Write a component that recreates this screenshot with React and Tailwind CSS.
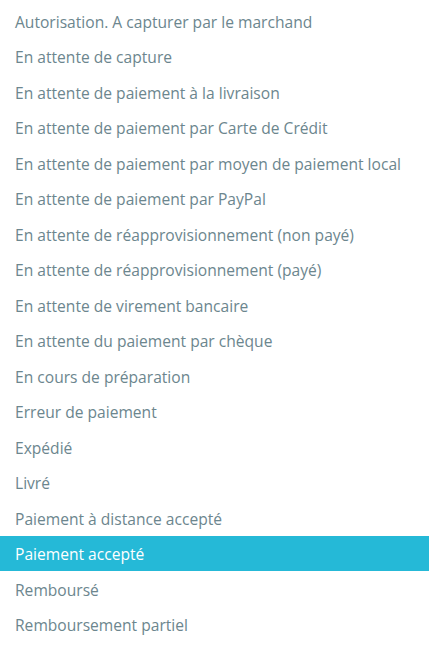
import React from 'react';

const statuses = [
  'Autorisation. A capturer par le marchand',
  'En attente de capture',
  'En attente de paiement à la livraison',
  'En attente de paiement par Carte de Crédit',
  'En attente de paiement par moyen de paiement local',
  'En attente de paiement par PayPal',
  'En attente de réapprovisionnement (non payé)',
  'En attente de réapprovisionnement (payé)',
  'En attente de virement bancaire',
  'En attente du paiement par chèque',
  'En cours de préparation',
  'Erreur de paiement',
  'Expédié',
  'Livré',
  'Paiement à distance accepté',
  'Paiement accepté',
  'Remboursé',
  'Remboursement partiel',
];

const App = () => {
  const selected = 'Paiement accepté';
  return (
    <div className="w-[429px] h-[649px] bg-white overflow-hidden pt-[3px] font-['Open_Sans',sans-serif]">
      <ul>
        {statuses.map((s) => (
          <li
            key={s}
            className={
              s === selected
                ? 'h-[35.5px] flex items-center pt-[3px] px-[15px] text-[15.6px] bg-[#25b9d7] text-white'
                : 'h-[35.5px] flex items-center pt-[3px] px-[15px] text-[15.6px] text-[#6c868e]'
            }
          >
            {s}
          </li>
        ))}
      </ul>
    </div>
  );
};

export default App;
